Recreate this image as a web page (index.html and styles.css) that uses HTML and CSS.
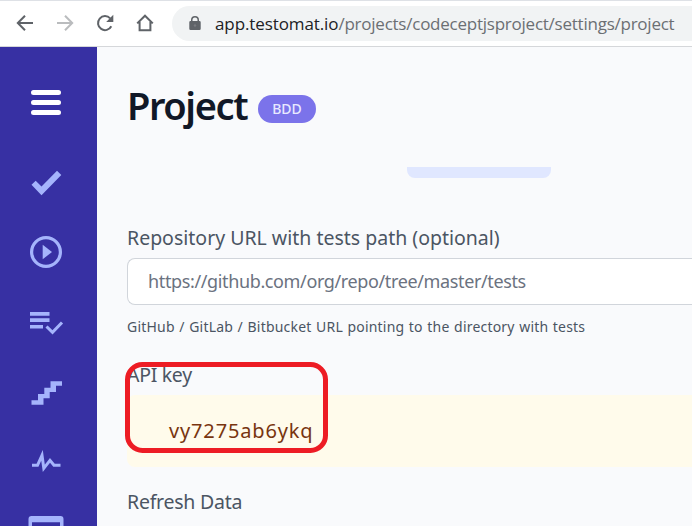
FILE: index.html
```html
<!DOCTYPE html>
<html lang="en">
<head>
<meta charset="utf-8">
<title>Project settings</title>
<link rel="stylesheet" href="styles.css">
</head>
<body>
<header class="toolbar">
  <nav class="controls">
    <svg viewBox="0 0 18 18"><path d="M17 9H2M9 1.7 1.8 9 9 16.3"/></svg>
    <svg class="disabled" viewBox="0 0 18 18"><path d="M1 9h15M9 1.7 16.2 9 9 16.3"/></svg>
    <svg viewBox="0 0 18 18"><path d="M15.3 12.2A7 7 0 1 1 14.2 4.4"/><path class="solid" d="M17.3.8v7.1h-7.1z"/></svg>
    <svg viewBox="0 0 18 18"><path d="M1.2 9.4 9 1.7l7.8 7.7M3.6 7.8v8.5h10.8V7.8"/></svg>
  </nav>
  <div class="address">
    <svg class="lock" viewBox="0 0 12 15"><path d="M1.5 5H2V4a4 4 0 0 1 8 0v1h.5A1.2 1.2 0 0 1 11.7 6.2v6.600a1.200 1.200 0 0 1-1.200 1.200h-9A1.200 1.200 0 0 1 .3 12.800V6.200A1.200 1.200 0 0 1 1.500 5zM3.500 5h5V4a2.500 2.500 0 0 0-5 0z"/><circle cx="6" cy="9.500" r="1.200" fill="#777a7e"/></svg>
    <span class="url"><b>app.testomat.io</b>/projects/codeceptjsproject/settings/project</span>
  </div>
</header>
<div class="app">
  <aside class="sidebar">
    <svg class="menu" width="34" height="30" viewBox="29 87 34 30"><path d="M33.500 92.500h25M33.500 102.500h25M33.500 112.500h25"/></svg>
    <svg width="36" height="30" viewBox="28 168 36 30"><path d="m31.500 184.800 4.200-4 5.800 5.700L57 170.800l4.300 4.200-19.800 20.300z"/></svg>
    <svg width="36" height="36" viewBox="28 234 36 36"><circle class="line" cx="46" cy="252" r="14.400"/><path d="M42.700 244.700v14.600L52 252z"/></svg>
    <svg width="36" height="28" viewBox="28 309 36 28"><path d="M30 312h19.500v3.700H30zM30 318.300h19.500v3.700H30zM30 325h13v3.500H30z"/><path class="line thin" d="m46.500 326.500 6 5.900 9.500-9.900"/></svg>
    <svg width="36" height="28" viewBox="28 379 36 28"><path d="M31.500 400.300H38v-6.300h6.300v-6.300h6.200v-6.500H62v4.500h-6v6.400h-6.300v6.200h-6.200v6.500h-12z"/></svg>
    <svg width="36" height="24" viewBox="28 450 36 24"><path class="line thin" d="M32 465.300h5.500l4.500-10 1.800 13 6.200-8 4 5h6.500"/></svg>
    <svg width="36" height="20" viewBox="28 515 36 20"><path fill-rule="evenodd" d="M31.500 516h29a3 3 0 0 1 3 3v16h-35v-16a3 3 0 0 1 3-3zm.500 6.200V535h28v-12.800z"/></svg>
  </aside>
  <main class="content">
    <div class="heading"><h1>Project</h1><span class="badge">BDD</span></div>
    <div class="save"></div>
    <label class="label repo">Repository URL with tests path (optional)</label>
    <div class="input">https://github.com/org/repo/tree/master/tests</div>
    <p class="hint">GitHub / GitLab / Bitbucket URL pointing to the directory with tests</p>
    <section class="api">
      <label class="label">API key</label>
      <code class="key">vy7275ab6ykq</code>
      <svg class="marker" width="204" height="92" viewBox="0 0 204 92"><rect x="2.500" y="2.500" width="198" height="86" rx="15"/></svg>
    </section>
    <label class="label refresh">Refresh Data</label>
  </main>
</div>
</body>
</html>
```
FILE: styles.css
```css
* { box-sizing: border-box; }
body {
  margin: 0;
  width: 692px;
  height: 526px;
  overflow: hidden;
  background: #f9fafc;
  font-family: "Noto Sans", sans-serif;
  color: #4b5563;
}
svg { display: block; flex: none; }
.toolbar {
  display: flex;
  align-items: flex-start;
  height: 47px;
  padding-top: 5px;
  border-top: 1px solid #dee1e6;
  border-bottom: 1px solid #d5d7da;
  background: #fff;
}
.controls { display: flex; gap: 22px; width: 172px; padding: 8px 0 0 16px; flex: none; }
.controls svg { width: 18px; height: 18px; fill: none; stroke: #5f6368; stroke-width: 2; }
.controls .disabled { stroke: #babcbe; }
.controls .solid { fill: #5f6368; stroke: none; }
.address {
  display: flex;
  align-items: center;
  flex: 1;
  height: 35px;
  padding-left: 17px;
  border-radius: 18px 0 0 18px;
  background: #f1f3f4;
}
.lock { width: 12px; height: 15px; fill: #5f6368; }
.url {
  margin-left: 14px;
  font: 17px/24px "Open Sans", sans-serif;
  letter-spacing: -0.24px;
  white-space: nowrap;
  color: #6b6f73;
}
.url b { font-weight: 400; letter-spacing: -0.1px; color: #202124; }
.app { display: flex; height: 479px; }
.sidebar {
  display: flex;
  flex-direction: column;
  align-items: center;
  width: 97px;
  flex: none;
  padding: 40px 5px 0 0;
  background: #3730a3;
  fill: #a5b4fc;
}
.sidebar svg + svg { margin-top: 39px; }
.sidebar .menu { stroke: #fff; stroke-width: 5; stroke-linecap: round; }
.sidebar .menu + svg { margin-top: 51px; }
.sidebar svg:nth-child(3) { margin-top: 36px; }
.sidebar svg:nth-child(5) { margin-top: 42px; }
.sidebar svg:nth-child(6) { margin-top: 43px; }
.sidebar svg:nth-child(7) { margin-top: 41px; }
.line { fill: none; stroke: #a5b4fc; stroke-width: 3.2; }
.thin { stroke-width: 3; }
.content { flex: 1; min-width: 0; padding-left: 30px; white-space: nowrap; }
.heading { display: flex; height: 120px; padding-top: 32px; }
h1 { width: 131px; margin: 0; font-size: 38px; line-height: 52px; font-weight: 600; letter-spacing: -1.4px; color: #111827; }
.badge {
  display: flex;
  justify-content: center;
  width: 58px;
  height: 28px;
  margin-top: 16px;
  border-radius: 14px;
  background: #7b73ea;
  color: #e8e9ff;
  font-size: 14px;
  line-height: 28px;
  font-weight: 500;
}
.save { width: 144px; height: 11px; margin-left: 280px; border-radius: 0 0 8px 8px; background: #e0e7ff; }
.label { display: block; height: 28px; font-size: 19.5px; line-height: 28px; }
.repo { margin-top: 46px; }
.input {
  height: 47px;
  margin-top: 6px;
  padding-left: 20px;
  border: 1px solid #d1d5db;
  border-right: 0;
  border-radius: 8px 0 0 8px;
  background: #fff;
  color: #6b7280;
  font-size: 18px;
  letter-spacing: -0.37px;
  line-height: 44px;
}
.hint { height: 20px; margin: 12px 0 0; font-size: 14px; line-height: 20px; letter-spacing: 0.2px; word-spacing: 0.7px; }
.api { position: relative; height: 106px; margin-top: 24px; }
.api .label { letter-spacing: -0.3px; }
.key {
  display: block;
  height: 72px;
  margin-top: 6px;
  padding-left: 42px;
  border-radius: 8px 0 0 8px;
  background: #fffbeb;
  color: #78350f;
  font: 20px/72px "Noto Sans", sans-serif;
  letter-spacing: 0.85px;
}
.marker { position: absolute; left: -2px; top: 1px; fill: none; stroke: #ed1c24; stroke-width: 5; }
.refresh { margin-top: 21px; letter-spacing: -0.25px; }
```
